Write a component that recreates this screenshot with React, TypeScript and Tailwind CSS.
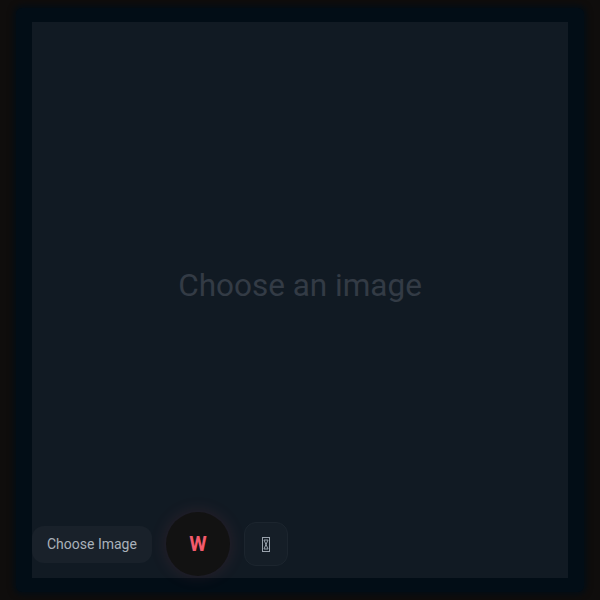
function MissingGlyph() {
  return (
    <svg width="8" height="15" viewBox="0 0 8 15" fill="none" stroke="#9aa3ad" strokeWidth="1">
      <rect x="0.5" y="0.5" width="7" height="14" />
      <path d="M2 3 H6 L2 12 H6 Z" />
    </svg>
  );
}

export default function App() {
  return (
    <div className="h-[600px] w-[600px] bg-[#0f0d0c] px-4 py-2 font-['Roboto',sans-serif]">
      <div className="h-full rounded-md bg-[#020d16] px-4 py-[14px] shadow-[0_0_6px_2px_#020d16]">
        <div className="relative flex h-full items-center justify-center bg-[#111a23] pb-[28px]">
          <span className="text-[31.5px] text-[#333b45]">Choose an image</span>
          <div className="absolute bottom-[2px] left-0 flex items-center gap-[14px]">
            <button className="h-[37px] rounded-xl bg-[#19212a] px-[15px] text-[14px] text-[#a9b1ba]">
              Choose Image
            </button>
            <button className="flex h-[64px] w-[64px] items-center justify-center rounded-full bg-[#121212] text-[20px] font-bold text-[#f25a6c] shadow-[0_0_18px_rgba(242,90,108,0.12)]">
              W
            </button>
            <button className="flex h-[44px] w-[44px] items-center justify-center rounded-xl border border-[#1c252e] bg-[#151e27]">
              <MissingGlyph />
            </button>
          </div>
        </div>
      </div>
    </div>
  );
}
